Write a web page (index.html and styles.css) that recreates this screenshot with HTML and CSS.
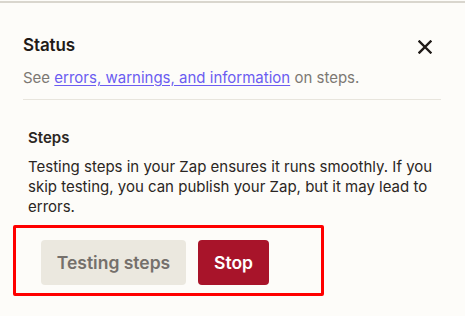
FILE: index.html
```html
<!DOCTYPE html>
<html>
<head>
<meta charset="utf-8">
<link rel="stylesheet" href="styles.css">
</head>
<body>
<div class="topline"></div>
<div class="panel">
  <div class="header">
    <div class="title-row">
      <h2 class="title">Status</h2>
      <button class="close" aria-label="Close">
        <svg width="14" height="14" viewBox="0 0 14 14"><path d="M1.5 1.5 L12.5 12.5 M12.5 1.5 L1.5 12.5" stroke="#1f1a17" stroke-width="2.4" stroke-linecap="square"/></svg>
      </button>
    </div>
    <p class="sub">See <a href="#" class="link">errors, warnings, and information</a> on steps.</p>
  </div>
  <div class="section">
    <h3 class="steps-title">Steps</h3>
    <p class="desc">Testing steps in your Zap ensures it runs smoothly. If you skip testing, you can publish your Zap, but it may lead to errors.</p>
  </div>
  <div class="actions">
    <button class="btn btn-disabled">Testing steps</button>
    <button class="btn btn-stop">Stop</button>
  </div>
</div>
</body>
</html>
```

FILE: styles.css
```css
html, body {
  margin: 0;
  padding: 0;
  background: #fdfcf9;
  font-family: Inter, "Noto Sans", sans-serif;
  color: #2b2623;
}
.topline {
  height: 2px;
  margin-top: 1px;
  background: #d9d6ce;
}
.panel {
  padding: 0 24px 0 23px;
}
.header {
  padding-top: 31px;
  border-bottom: 1px solid #e8e5dd;
  padding-bottom: 11px;
}
.title-row {
  display: flex;
  justify-content: space-between;
  align-items: center;
  height: 22px;
}
.title {
  margin: 0;
  font-size: 17px;
  font-weight: 600;
  color: #1f1a17;
  letter-spacing: -0.1px;
}
.close {
  border: 0;
  background: none;
  padding: 0;
  margin-right: 9px;
  width: 14px;
  height: 14px;
  margin-top: 4px;
  display: flex;
}
.close svg { display: block; }
.sub {
  margin: 12px 0 0;
  font-size: 15px;
  line-height: 20px;
  color: #7c7873;
}
.link {
  color: #6b5cf1;
  text-decoration: underline;
  text-underline-offset: 2px;
}
.section {
  padding: 28px 0 0 5px;
}
.steps-title {
  margin: 0;
  font-size: 15px;
  font-weight: 600;
  line-height: 20px;
  color: #2b2623;
}
.desc {
  margin: 9px 0 0;
  font-size: 15px;
  line-height: 20px;
  color: #2b2623;
}
.actions {
  margin: 8px 0 0 -10px;
  width: 280px;
  border: 3px solid #ff0000;
  border-radius: 2px;
  display: flex;
  align-items: flex-start;
  gap: 12px;
  padding: 12px 0 8px 25px;
  box-sizing: content-box;
}
.btn {
  height: 45px;
  border: 0;
  border-radius: 4px;
  font-family: Inter, "Noto Sans", sans-serif;
  font-size: 17.5px;
  font-weight: 600;
  padding: 0;
  white-space: nowrap;
}
.btn-disabled {
  background: #ebe8df;
  color: #75706b;
  width: 145px;
}
.btn-stop {
  background: #a8142a;
  color: #ffffff;
  width: 71px;
}
```
